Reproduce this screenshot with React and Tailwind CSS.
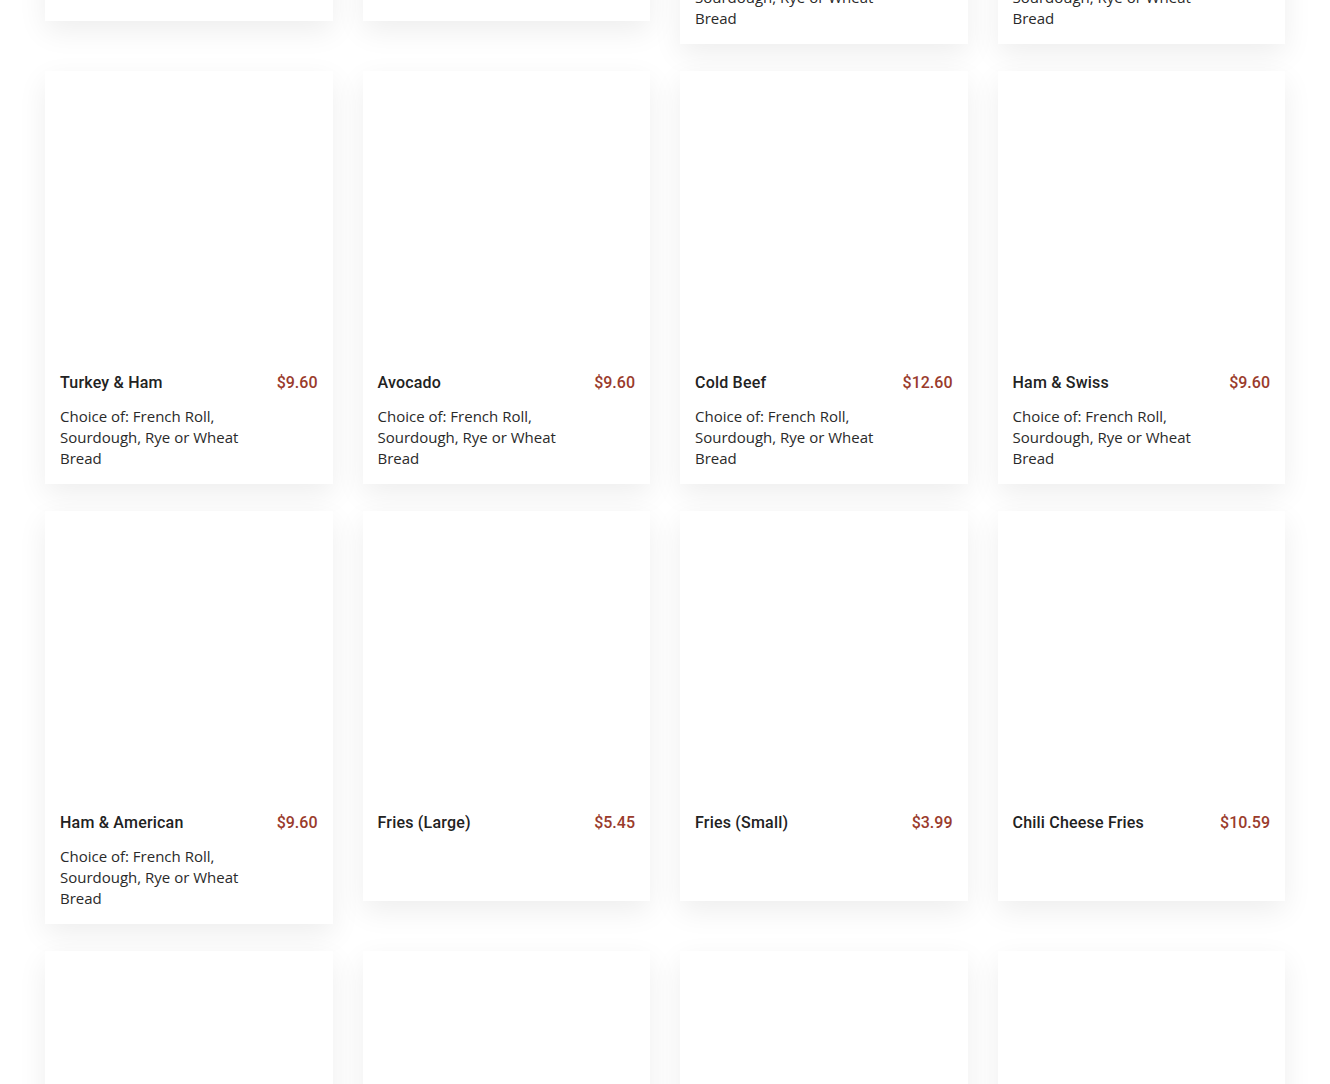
import React from "react";

const items = [
  { name: "Onion Rings", price: "$5.45", desc: "" },
  { name: "Tater Tots", price: "$4.99", desc: "" },
  { name: "Pastrami", price: "$12.60", desc: "Choice of: French Roll, Sourdough, Rye or Wheat Bread" },
  { name: "Tuna", price: "$9.60", desc: "Choice of: French Roll, Sourdough, Rye or Wheat Bread" },
  { name: "Turkey & Ham", price: "$9.60", desc: "Choice of: French Roll, Sourdough, Rye or Wheat Bread" },
  { name: "Avocado", price: "$9.60", desc: "Choice of: French Roll, Sourdough, Rye or Wheat Bread" },
  { name: "Cold Beef", price: "$12.60", desc: "Choice of: French Roll, Sourdough, Rye or Wheat Bread" },
  { name: "Ham & Swiss", price: "$9.60", desc: "Choice of: French Roll, Sourdough, Rye or Wheat Bread" },
  { name: "Ham & American", price: "$9.60", desc: "Choice of: French Roll, Sourdough, Rye or Wheat Bread" },
  { name: "Fries (Large)", price: "$5.45", desc: "" },
  { name: "Fries (Small)", price: "$3.99", desc: "" },
  { name: "Chili Cheese Fries", price: "$10.59", desc: "" },
  { name: "Onion Rings", price: "$5.45", desc: "" },
  { name: "Mozzarella Sticks", price: "$7.99", desc: "" },
  { name: "Soda", price: "$2.49", desc: "" },
  { name: "Bottled Water", price: "$1.99", desc: "" },
];

function MenuCard({ item }) {
  return (
    <div className="bg-white shadow-[0_10px_28px_rgba(0,0,0,0.07)]">
      {/* image placeholder */}
      <div className="h-[288px] bg-white" />
      <div className="px-[15px] pt-[16px] pb-[15px]">
        <div className="flex justify-between items-start">
          <h3
            className="text-[16px] leading-[16px] font-medium text-[#222] tracking-[0.2px]"
            style={{ fontFamily: "Roboto, 'Liberation Sans', sans-serif" }}
          >
            {item.name}
          </h3>
          <span
            className="text-[16px] leading-[16px] font-medium text-[#9a3b2c]"
            style={{ fontFamily: "Roboto, 'Liberation Sans', sans-serif" }}
          >
            {item.price}
          </span>
        </div>
        <p
          className="mt-[15px] min-h-[40px] max-w-[195px] text-[15px] leading-[21px] text-[#2a2a2a]"
          style={{ fontFamily: "'Open Sans', sans-serif" }}
        >
          {item.desc}
        </p>
      </div>
    </div>
  );
}

export default function App() {
  return (
    <div className="min-h-screen bg-white overflow-hidden h-[1084px]">
      <div className="px-[45px] mt-[-369px] grid grid-cols-4 gap-x-[30px] gap-y-[27px] items-start">
        {items.map((item, i) => (
          <MenuCard key={i} item={item} />
        ))}
      </div>
    </div>
  );
}
